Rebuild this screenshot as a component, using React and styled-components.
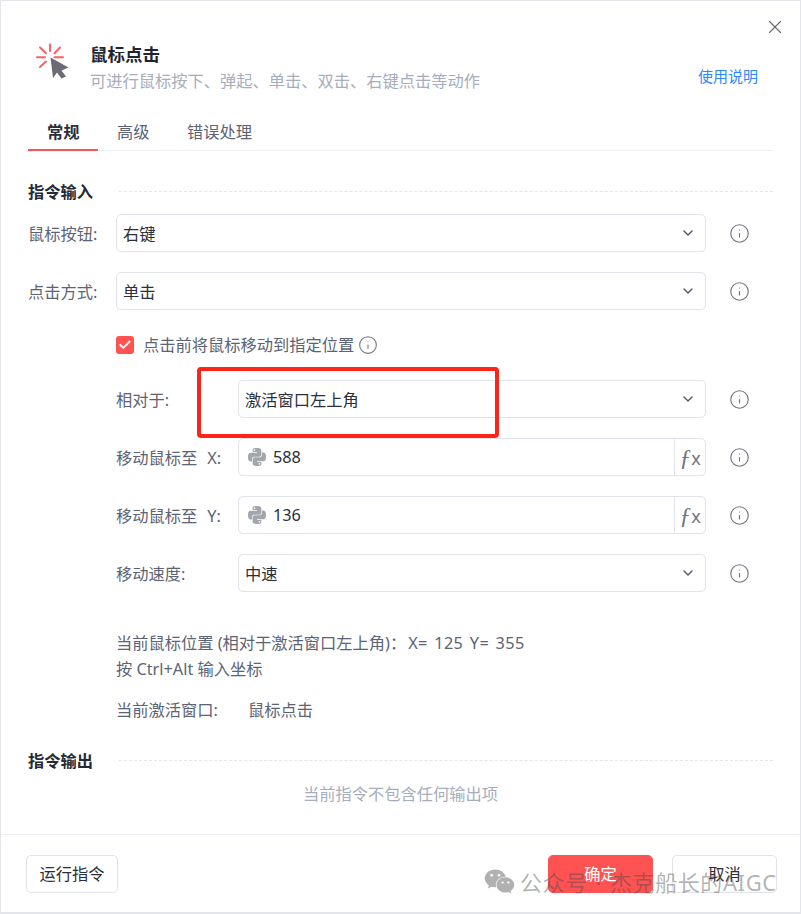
import React from "react";
import styled, { createGlobalStyle } from "styled-components";
import { ChevronDown, Info, X, Check } from "lucide-react";
import { FaWeixin } from "react-icons/fa";
import { SiPython } from "react-icons/si";

const Global = createGlobalStyle`
  html, body { margin: 0; padding: 0; background: #fff; }
  body { font-family: "Noto Sans", "Noto Sans CJK SC", sans-serif; }
  * { box-sizing: border-box; }
`;

const Dialog = styled.div`
  position: relative;
  width: 801px;
  height: 914px;
  background: #fff;
  border: 1px solid #e4e5eb;
  border-bottom-width: 2px;
  display: flex;
  flex-direction: column;
  overflow: hidden;
  font-size: 16.25px;
  line-height: 24px;
  color: #5b6375;
`;
const CloseBtn = styled.div`
  position: absolute;
  top: 15px;
  right: 14px;
  color: #66686e;
  display: flex;
`;
const Header = styled.header`
  display: flex;
  height: 99px;
  padding: 41px 42px 0 34px;
`;
const TitleBlock = styled.div`
  margin-left: 19px;
  flex: 1;
`;
const Title = styled.div`
  font-size: 17.5px;
  font-weight: 700;
  line-height: 24px;
  color: #1f2430;
`;
const Subtitle = styled.div`
  line-height: 24px;
  margin-top: 3px;
  color: #a6adbd;
`;
const HelpLink = styled.a`
  font-size: 15px;
  line-height: 20px;
  margin-top: 24px;
  color: #2b87ff;
`;
const Tabs = styled.nav`
  display: flex;
  height: 51px;
  margin: 0 27px;
  padding-top: 20px;
  border-bottom: 1px solid #eceef4;
`;
const Tab = styled.div`
  width: 70px;
  padding: 0 19px;
  white-space: nowrap;
  height: 31px;
  font-weight: ${(p) => (p.$active ? 700 : 400)};
  color: ${(p) => (p.$active ? "#2a2f3b" : "#5b6375")};
  border-bottom: 2px solid ${(p) => (p.$active ? "#ff5252" : "transparent")};
`;
const Body = styled.main`
  flex: 1;
  padding: 29px 27px 0;
`;
const SectionHead = styled.div`
  display: flex;
  align-items: center;
  font-weight: 700;
  color: #252a36;
  height: 24px;
  &::after {
    content: "";
    flex: 1;
    margin-left: 26px;
    height: 0;
    border-top: 1px dashed #e3e5ea;
    transform: translateY(-1px);
  }
`;
const Row = styled.div`
  display: flex;
  align-items: center;
  height: 38px;
  margin-top: ${(p) => p.$mt ?? 20}px;
  padding-left: ${(p) => (p.$nested ? 88 : 0)}px;
`;
const Label = styled.div`
  flex: none;
  display: flex;
  width: ${(p) => (p.$nested ? 122 : 88)}px;
  padding-top: 2px;
  white-space: pre;
  color: #5b6375;
`;
const Axis = styled.span`
  margin-left: 10px;
`;
const Field = styled.div`
  flex: none;
  width: ${(p) => (p.$nested ? 468 : 590)}px;
  height: 38px;
  display: flex;
  align-items: center;
  border: 1px solid #e2e3ea;
  border-radius: 5px;
  color: #2a2f3b;
  padding-left: 6px;
`;
const FieldText = styled.div`
  flex: 1;
  padding-top: ${(p) => (p.$code ? 0 : 2)}px;
`;
const Chevron = styled(ChevronDown)`
  margin-right: 9px;
  color: #4d5566;
`;
const PyIcon = styled(SiPython)`
  color: #a3a6ad;
  margin: 0 7px 0 3px;
  font-size: 18px;
`;
const FxBox = styled.div`
  width: 31px;
  height: 36px;
  border-left: 1px solid #e2e3ea;
  display: flex;
  align-items: center;
  justify-content: center;
  color: #71757f;
`;
const FxF = styled.span`
  font-family: "Liberation Serif", serif;
  font-style: italic;
  font-size: 24px;
`;
const FxX = styled.span`
  font-size: 18px;
  margin-top: 2px;
`;
const Hint = styled(Info)`
  flex: none;
  margin-left: 23px;
  color: #71757f;
`;
const CheckRow = styled.div`
  display: flex;
  align-items: center;
  margin-top: 24px;
  padding-left: 88px;
  height: 22px;
`;
const CheckBox = styled.div`
  width: 18px;
  height: 18px;
  border-radius: 3px;
  background: #ff5252;
  color: #fff;
  display: flex;
  align-items: center;
  justify-content: center;
  margin-right: 9px;
`;
const SmallHint = styled(Info)`
  margin-left: 4px;
  color: #71757f;
`;
const NoteBlock = styled.div`
  margin: 38px 0 0 88px;
  line-height: 26px;
`;
const Coords = styled.span`
  margin-left: 2px;
  letter-spacing: 0.35px;
  word-spacing: 2px;
`;
const WindowRow = styled.div`
  display: flex;
  margin: 15px 0 0 88px;
  line-height: 26px;
`;
const WindowLabel = styled.div`
  width: 132px;
`;
const OutputHead = styled(SectionHead)`
  margin-top: 26px;
`;
const Empty = styled.div`
  text-align: center;
  color: #a6adbd;
  margin-top: 9px;
`;
const Footer = styled.footer`
  height: 78px;
  border-top: 1px solid #eceef4;
  display: flex;
  align-items: flex-start;
  padding: 20px 23px 0 25px;
`;
const Btn = styled.div`
  height: 38px;
  width: ${(p) => p.$w}px;
  margin-left: ${(p) => p.$ml || 0}px;
  border-radius: 5px;
  display: flex;
  align-items: center;
  justify-content: center;
  background: ${(p) => (p.$primary ? "#ff5252" : "#fff")};
  color: ${(p) => (p.$primary ? "#fff" : "#2a2f3b")};
  border: 1px solid ${(p) => (p.$primary ? "#ff5252" : "#e2e3ea")};
`;
const Spacer = styled.div`
  flex: 1;
`;
const Highlight = styled.div`
  position: absolute;
  left: 196px;
  top: 366px;
  width: 302px;
  height: 71px;
  border: 4px solid #ff2318;
  border-radius: 4px;
  pointer-events: none;
`;
const Watermark = styled.div`
  position: absolute;
  left: 483px;
  top: 865px;
  display: flex;
  align-items: center;
  white-space: nowrap;
  font-size: 22px;
  line-height: 30px;
  letter-spacing: 0.6px;
  word-spacing: 1.5px;
  color: rgba(70, 70, 70, 0.42);
  pointer-events: none;
`;
const WeChat = styled(FaWeixin)`
  font-size: 31px;
  margin-right: 5px;
`;

const ClickIcon = () => (
  <svg width="36" height="38" viewBox="36 44 36 38" style={{ flex: "none" }}>
    <g stroke="#ff5f5f" strokeWidth="2" strokeLinecap="round" fill="none">
      <path d="M51 46.5V53M38 59.3H46M55.5 59.3H64M41 49.5L47 55.2M61 49.5L55.5 55.2M41 69L47 63.5" />
    </g>
    <path d="M51.5 59.5L69.5 69.5L62.5 72.5L67 78.5L62.5 80.5L58 74.5L54 80Z" fill="#6c6b74" />
  </svg>
);

const Select = ({ value, nested }) => (
  <Field $nested={nested}>
    <FieldText>{value}</FieldText>
    <Chevron size={16} />
  </Field>
);
const PyInput = ({ value }) => (
  <Field $nested>
    <PyIcon />
    <FieldText $code>{value}</FieldText>
    <FxBox><FxF>ƒ</FxF><FxX>x</FxX></FxBox>
  </Field>
);
const HintIcon = () => <Hint size={21} strokeWidth={1.3} />;

export default function App() {
  return (
    <>
      <Global />
      <Dialog>
        <CloseBtn><X size={22} strokeWidth={1.2} /></CloseBtn>
        <Header>
          <ClickIcon />
          <TitleBlock>
            <Title>鼠标点击</Title>
            <Subtitle>可进行鼠标按下、弹起、单击、双击、右键点击等动作</Subtitle>
          </TitleBlock>
          <HelpLink>使用说明</HelpLink>
        </Header>
        <Tabs>
          <Tab $active>常规</Tab>
          <Tab>高级</Tab>
          <Tab>错误处理</Tab>
        </Tabs>
        <Body>
          <SectionHead>指令输入</SectionHead>
          <Row $mt={10}>
            <Label>鼠标按钮:</Label>
            <Select value="右键" />
            <HintIcon />
          </Row>
          <Row>
            <Label>点击方式:</Label>
            <Select value="单击" />
            <HintIcon />
          </Row>
          <CheckRow>
            <CheckBox><Check size={14} strokeWidth={3.2} /></CheckBox>
            点击前将鼠标移动到指定位置
            <SmallHint size={20} strokeWidth={1.3} />
          </CheckRow>
          <Row $nested $mt={24}>
            <Label $nested>相对于:</Label>
            <Select nested value="激活窗口左上角" />
            <HintIcon />
          </Row>
          <Row $nested>
            <Label $nested>移动鼠标至<Axis>X:</Axis></Label>
            <PyInput value="588" />
            <HintIcon />
          </Row>
          <Row $nested>
            <Label $nested>移动鼠标至<Axis>Y:</Axis></Label>
            <PyInput value="136" />
            <HintIcon />
          </Row>
          <Row $nested>
            <Label $nested>移动速度:</Label>
            <Select nested value="中速" />
            <HintIcon />
          </Row>
          <NoteBlock>
            当前鼠标位置 (相对于激活窗口左上角)：<Coords>X= 125 Y= 355</Coords>
            <br />
            按 Ctrl+Alt 输入坐标
          </NoteBlock>
          <WindowRow>
            <WindowLabel>当前激活窗口:</WindowLabel>
            鼠标点击
          </WindowRow>
          <OutputHead>指令输出</OutputHead>
          <Empty>当前指令不包含任何输出项</Empty>
        </Body>
        <Footer>
          <Btn $w={92}>运行指令</Btn>
          <Spacer />
          <Btn $w={105} $primary>确定</Btn>
          <Btn $w={105} $ml={19}>取消</Btn>
        </Footer>
        <Highlight />
        <Watermark>
          <WeChat />
          公众号 · 杰克船长的AIGC
        </Watermark>
      </Dialog>
    </>
  );
}
